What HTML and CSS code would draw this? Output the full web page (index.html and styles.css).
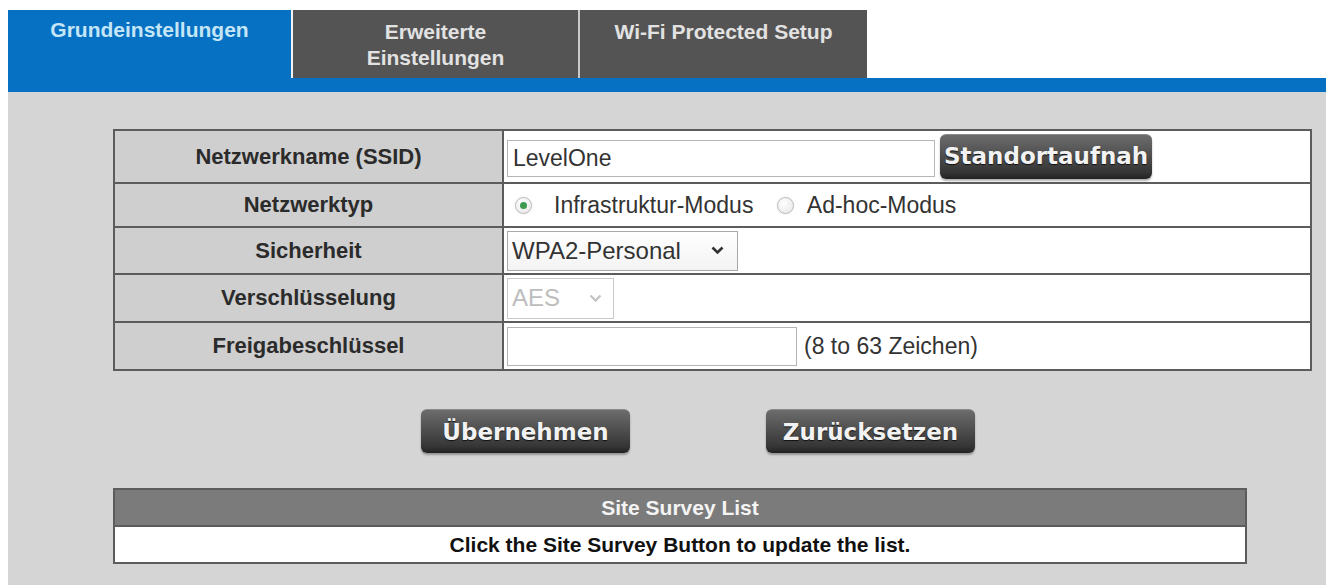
FILE: index.html
```html
<!DOCTYPE html>
<html lang="de">
<head>
  <meta charset="UTF-8">
  <title>Wireless</title>
  <link rel="stylesheet" href="styles.css">
</head>
<body>
  <ul class="tabs">
    <li class="tab active">Grundeinstellungen</li>
    <li class="tab">Erweiterte<br>Einstellungen</li>
    <li class="tab">Wi-Fi Protected Setup</li>
  </ul>
  <div class="tabline"></div>

  <div class="content">
    <table class="form">
      <tr class="r1">
        <th>Netzwerkname (SSID)</th>
        <td><input class="text ssid" type="text" value="LevelOne"><span class="btn btn-survey">Standortaufnah</span></td>
      </tr>
      <tr class="r2">
        <th>Netzwerktyp</th>
        <td>
          <span class="radio on first"></span><span class="opt">Infrastruktur-Modus</span>
          <span class="radio second"></span><span class="opt">Ad-hoc-Modus</span>
        </td>
      </tr>
      <tr class="r3">
        <th>Sicherheit</th>
        <td>
          <span class="select wide">WPA2-Personal
            <svg width="13" height="9" viewBox="0 0 13 9"><path d="M1.5 1.5 L6.5 6.5 L11.5 1.5" fill="none" stroke="#333" stroke-width="2.6"/></svg>
          </span>
        </td>
      </tr>
      <tr class="r4">
        <th>Verschlüsselung</th>
        <td>
          <span class="select disabled">AES
            <svg width="13" height="9" viewBox="0 0 13 9"><path d="M1.5 1.5 L6.5 6.5 L11.5 1.5" fill="none" stroke="#c4c4c4" stroke-width="2.4"/></svg>
          </span>
        </td>
      </tr>
      <tr class="r5">
        <th>Freigabeschlüssel</th>
        <td><input class="text key" type="text"><span class="hint">(8 to 63 Zeichen)</span></td>
      </tr>
    </table>

    <div class="actions">
      <button class="btn">Übernehmen</button>
      <button class="btn">Zurücksetzen</button>
    </div>

    <table class="survey">
      <tr><th>Site Survey List</th></tr>
      <tr><td>Click the Site Survey Button to update the list.</td></tr>
    </table>
  </div>
</body>
</html>
```

FILE: styles.css
```css
html, body {
  overflow: hidden;
}
body, ul, li {margin: 0; padding: 0;}
body {
  margin: 10px 0 0 8px;
  background-color: #fff;
  font: 23px "Liberation Sans", Arial, sans-serif;
  color: #333;
}

/* tabs */
.tabs {
  display: flex;
  list-style: none;
  height: 68px;
}
.tab {
  width: 285px;
  padding-top: 9px;
  background-color: #545454;
  color: #e2e2e2;
  font-size: 21px;
  font-weight: bold;
  line-height: 26px;
  text-align: center;
  box-sizing: border-box;
}
.tab.active {
  padding-top: 7px;
  background-color: #0670c3;
  color: #c4e6f6;
  border-right: 2px solid #f2f2f2;
}
.tab + .tab + .tab {
  width: 289px;
  border-left: 2px solid #c8c8c8;
}
.tabline {
  height: 14px;
  background-color: #0670c3;
}

.content {
  height: 493px;
  padding: 37px 0 0 105px;
  box-sizing: border-box;
  background-color: #d5d5d5;
}

/* form table */
.form {
  width: 1199px;
  border: 2px solid #5c5c5c;
  border-spacing: 0;
  background-color: #fff;
}
.form th {
  width: 387px;
  padding: 0;
  border-right: 2px solid #5c5c5c;
  background-color: #cfcfcf;
  color: #2b2b2b;
  font-size: 22px;
  text-align: center;
}
.form td {
  padding: 0 0 0 3px;
  white-space: nowrap;
}
.form tr + tr th,
.form tr + tr td {
  border-top: 2px solid #5c5c5c;
}
.r1 th, .r1 td {height: 51px;}
.r2 th, .r2 td {height: 42px;}
.r3 th, .r3 td {height: 45px;}
.r4 th, .r4 td {height: 46px;}
.r5 th, .r5 td {height: 46px;}

.text {
  box-sizing: border-box;
  border: 1px solid #b5b5b5;
  padding: 0 5px;
  margin: 0;
  font: 23px "Liberation Sans", Arial, sans-serif;
  color: #333;
  vertical-align: middle;
  outline: none;
}
.ssid {width: 428px; height: 37px; margin-top: 3px;}
.key {width: 290px; height: 39px;}
.hint {margin-left: 7px; vertical-align: middle;}

.radio {
  display: inline-block;
  position: relative;
  width: 15px;
  height: 15px;
  border: 1px solid #bcbcbc;
  border-radius: 50%;
  background: radial-gradient(circle at 40% 35%, #fff, #e4e4e4);
  box-shadow: 0 0 2px #e0e0e0;
  vertical-align: middle;
}
.radio.on::after {
  content: "";
  position: absolute;
  left: 4px;
  top: 4px;
  width: 7px;
  height: 7px;
  border-radius: 50%;
  background-color: #3b9a4d;
}
.radio.first {margin: 0 22px 0 8px;}
.radio.second {margin: 0 13px 0 17px;}
.opt {vertical-align: middle;}

.select {
  display: inline-flex;
  align-items: center;
  justify-content: space-between;
  box-sizing: border-box;
  height: 40px;
  padding: 0 13px 0 4px;
  border: 1px solid #a9a9a9;
  background: linear-gradient(#fff, #f3f3f3);
  font-size: 24px;
  color: #333;
  vertical-align: middle;
}
.select.wide {width: 231px;}
.select.disabled {
  width: 107px;
  height: 41px;
  padding-right: 11px;
  color: #bdbdbd;
  border-color: #c9c9c9;
  background: #fff;
}

/* buttons */
.btn {
  display: inline-block;
  box-sizing: border-box;
  width: 209px;
  height: 44px;
  padding: 0;
  border: 0;
  border-top: 1px solid #8a8a8a;
  border-radius: 6px;
  background: linear-gradient(#6c6c6c, #4c4c4c 50%, #353535 85%, #222);
  box-shadow: 0 2px 2px rgba(0,0,0,.3);
  color: #f2f2f2;
  font: bold 23px "DejaVu Sans", Verdana, sans-serif;
  text-shadow: 0 1px 1px #111;
  text-align: center;
  line-height: 42px;
}
.btn-survey {
  width: 212px;
  height: 45px;
  margin-left: 5px;
  padding-left: 4px;
  overflow: hidden;
  text-align: left;
  white-space: nowrap;
  vertical-align: middle;
}
.actions {
  display: flex;
  gap: 136px;
  margin: 38px 0 0 308px;
}

/* site survey */
.survey {
  width: 1134px;
  margin-top: 35px;
  border: 2px solid #5c5c5c;
  border-spacing: 0;
  font-size: 21px;
  font-weight: bold;
  text-align: center;
}
.survey th {
  height: 35px;
  padding: 0;
  background-color: #7b7b7b;
  color: #f4f4f4;
}
.survey td {
  height: 35px;
  padding: 0;
  border-top: 2px solid #5c5c5c;
  background-color: #fff;
  color: #111;
}
```
